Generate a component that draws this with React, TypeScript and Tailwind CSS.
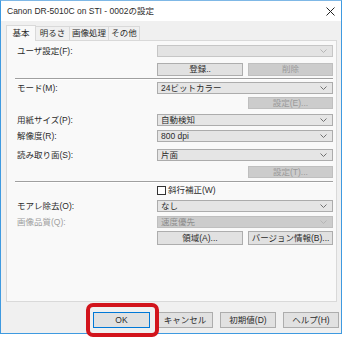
import React from "react";

const font = { fontFamily: '"Liberation Sans", "Noto Sans CJK JP", sans-serif' };

function Chevron({ dim }: { dim?: boolean }) {
  return (
    <svg width="7" height="5" viewBox="0 0 7 5" className="absolute right-[5px] top-1/2 -translate-y-1/2">
      <path d="M0.5 1 L3.5 4 L6.5 1" fill="none" stroke={dim ? "#b5b5b5" : "#707070"} strokeWidth="1" />
    </svg>
  );
}

function Combo({ text, disabled, empty }: { text?: string; disabled?: boolean; empty?: boolean }) {
  const cls = disabled
    ? "bg-[#cccccc] border-[#bfbfbf] text-[#8d8d8d]"
    : empty
    ? "bg-[#e3e3e3] border-[#c6c6c6] text-[#2b2b2b]"
    : "bg-[#e5e5e5] border-[#acacac] text-[#2b2b2b]";
  return (
    <div className={`relative w-[176px] h-[12px] border ${cls} flex items-center pl-[3px] text-[8.5px] leading-none`}>
      {text}
      <Chevron dim={disabled || empty} />
    </div>
  );
}

function Btn({ text, disabled, w = "w-[86px]", h = "h-[13px]" }: { text: string; disabled?: boolean; w?: string; h?: string }) {
  const cls = disabled
    ? "bg-[#cccccc] border-[#bfbfbf] text-[#9a9a9a]"
    : "bg-[#e1e1e1] border-[#adadad] text-[#2b2b2b]";
  return (
    <div className={`${w} ${h} border ${cls} flex items-center justify-center text-[8.5px] leading-none`}>
      {text}
    </div>
  );
}

function Row({ label, dim, children, mt }: { label?: string; dim?: boolean; children: React.ReactNode; mt: string }) {
  return (
    <div className={`flex items-center ${mt}`}>
      <div className={`w-[150px] pl-[10px] text-[8.5px] leading-none ${dim ? "text-[#a0a0a0]" : "text-[#2b2b2b]"}`}>
        {label}
      </div>
      {children}
    </div>
  );
}

function Sep({ mt }: { mt: string }) {
  return (
    <div className={`${mt} ml-[8px] mr-[3px] h-[2px] border-t border-[#a0a0a0] border-b border-b-white`} />
  );
}

export default function App() {
  return (
    <div className="w-[343px] h-[338px] bg-white relative overflow-hidden text-[#2b2b2b]" style={font}>
      <div className="w-[342px] h-[334px] border border-t-[#7fb8e6] border-[#3f9ae0] bg-[#f0f0f0] flex flex-col">
        <div className="h-[20px] bg-white flex items-center justify-between pl-[6px] pr-[6px]">
          <span className="text-[8.5px] leading-none">Canon DR-5010C on STI - 0002の設定</span>
          <svg width="9" height="9" viewBox="0 0 9 9">
            <path d="M0.5 0.5 L8.5 8.5 M8.5 0.5 L0.5 8.5" stroke="#222" strokeWidth="1" />
          </svg>
        </div>

        <div className="flex items-end h-[19px] pl-[5px]">
          <div className="w-[30px] h-[16px] bg-[#f9f9f9] border border-b-0 border-[#d9d9d9] flex items-center justify-center text-[8.5px] leading-none relative top-[1px] z-10">
            基本
          </div>
          <div className="w-[34px] h-[14px] border border-b-0 border-l-0 border-[#d9d9d9] flex items-center justify-center text-[8.5px] leading-none">
            明るさ
          </div>
          <div className="w-[39px] h-[14px] border border-b-0 border-l-0 border-[#d9d9d9] flex items-center justify-center text-[8.5px] leading-none">
            画像処理
          </div>
          <div className="w-[31px] h-[14px] border border-b-0 border-l-0 border-[#d9d9d9] flex items-center justify-center text-[8.5px] leading-none">
            その他
          </div>
        </div>

        <div className="ml-[5px] w-[331px] h-[262px] bg-[#f9f9f9] border border-[#d9d9d9] flex flex-col">
          <Row label="ユーザ設定(F):" mt="mt-[4px]">
            <Combo empty />
          </Row>
          <div className="flex mt-[6px] pl-[150px] gap-[5px]">
            <Btn text="登録.." />
            <Btn text="削除" disabled w="w-[85px]" />
          </div>
          <Sep mt="mt-[2px]" />
          <Row label="モード(M):" mt="mt-[2px]">
            <Combo text="24ビットカラー" />
          </Row>
          <div className="flex mt-[3px] pl-[241px]">
            <Btn text="設定(E)..." disabled w="w-[85px]" h="h-[12px]" />
          </div>
          <Row label="用紙サイズ(P):" mt="mt-[5px]">
            <Combo text="自動検知" />
          </Row>
          <Row label="解像度(R):" mt="mt-[4px]">
            <Combo text="800 dpi" />
          </Row>
          <Row label="読み取り面(S):" mt="mt-[7px]">
            <Combo text="片面" />
          </Row>
          <div className="flex mt-[5px] pl-[241px]">
            <Btn text="設定(T)..." disabled w="w-[85px]" h="h-[12px]" />
          </div>
          <Sep mt="mt-[3px]" />
          <div className="flex items-center mt-[3px] pl-[150px] gap-[2px]">
            <div className="w-[9px] h-[9px] bg-white border border-[#333]" />
            <span className="text-[8.5px] leading-none">斜行補正(W)</span>
          </div>
          <Row label="モアレ除去(O):" mt="mt-[5px]">
            <Combo text="なし" />
          </Row>
          <Row label="画像品質(Q):" dim mt="mt-[4px]">
            <Combo text="速度優先" disabled />
          </Row>
          <div className="flex mt-[3px] pl-[150px] gap-[5px]">
            <Btn text="領域(A)..." h="h-[14px]" />
            <Btn text="バージョン情報(B)..." w="w-[85px]" h="h-[14px]" />
          </div>
        </div>

        <div className="flex mt-[10px] pl-[92px] gap-[7px]">
          <div className="w-[57px] h-[16px] border border-[#0078d7] bg-[#e1e1e1] flex items-center justify-center text-[8.5px] leading-none">
            OK
          </div>
          <Btn text="キャンセル" w="w-[56px]" h="h-[16px]" />
          <Btn text="初期値(D)" w="w-[56px]" h="h-[16px]" />
          <Btn text="ヘルプ(H)" w="w-[56px]" h="h-[16px]" />
        </div>
      </div>

      <div className="absolute left-[86px] top-[303px] w-[73px] h-[34px] border-[4px] border-[#d2141c] rounded-[7px]" />
    </div>
  );
}
